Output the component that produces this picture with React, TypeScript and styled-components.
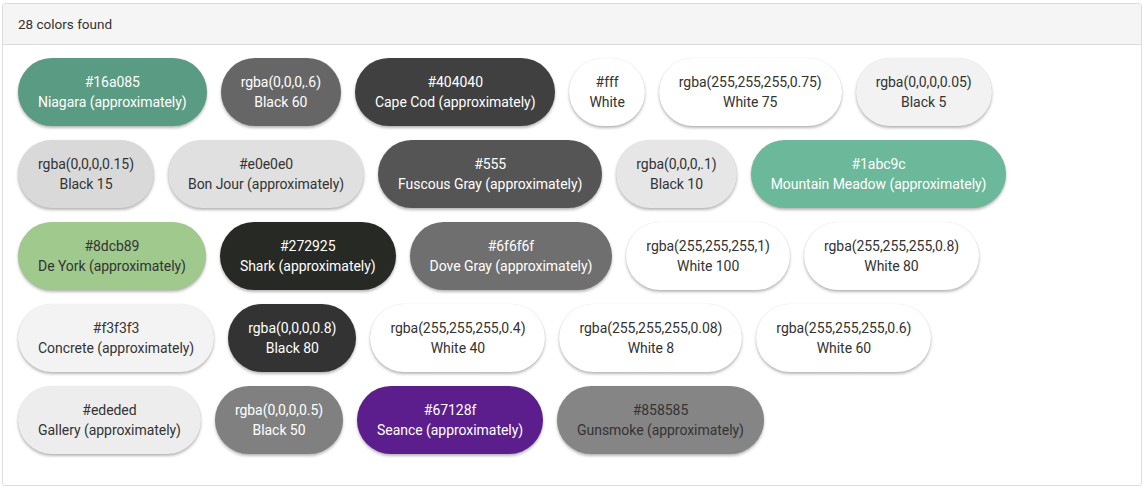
import React from "react";
import styled, { createGlobalStyle } from "styled-components";

const Global = createGlobalStyle`
  html, body { margin: 0; padding: 0; background: #fff; }
  body { font-family: Roboto, "Liberation Sans", sans-serif; }
`;

const Page = styled.div`
  padding: 3px 2px 1px 2px;
`;

const Panel = styled.section`
  border: 1px solid #dddddd;
  border-radius: 3px;
  background: #fff;
  overflow: hidden;
`;

const Header = styled.header`
  background: #f5f5f5;
  border-bottom: 1px solid #dddddd;
  padding: 10px 15px;
  font-size: 13.5px;
  line-height: 20px;
  color: #333;
`;

const Body = styled.div`
  display: flex;
  flex-wrap: wrap;
  gap: 14px;
  padding: 13px 20px 31px 15px;
`;

const Pill = styled.div<{ $bg: string; $light: boolean }>`
  background: ${(p) => p.$bg};
  color: ${(p) => (p.$light ? "#ffffff" : "#333333")};
  border-radius: 34px;
  padding: 14px 20px;
  font-size: 14px;
  letter-spacing: -0.05px;
  line-height: 20px;
  text-align: center;
  white-space: nowrap;
  box-shadow: 0 2px 3px rgba(0, 0, 0, 0.28), 0 0 1px rgba(0, 0, 0, 0.12);
`;

const Line = styled.div``;

type C = { code: string; name: string; bg: string; light: boolean };

const colors: C[] = [
  { code: "#16a085", name: "Niagara (approximately)", bg: "#5a9b83", light: true },
  { code: "rgba(0,0,0,.6)", name: "Black 60", bg: "#666666", light: true },
  { code: "#404040", name: "Cape Cod (approximately)", bg: "#404040", light: true },
  { code: "#fff", name: "White", bg: "#ffffff", light: false },
  { code: "rgba(255,255,255,0.75)", name: "White 75", bg: "#ffffff", light: false },
  { code: "rgba(0,0,0,0.05)", name: "Black 5", bg: "#f2f2f2", light: false },
  { code: "rgba(0,0,0,0.15)", name: "Black 15", bg: "#d9d9d9", light: false },
  { code: "#e0e0e0", name: "Bon Jour (approximately)", bg: "#e0e0e0", light: false },
  { code: "#555", name: "Fuscous Gray (approximately)", bg: "#555555", light: true },
  { code: "rgba(0,0,0,.1)", name: "Black 10", bg: "#e6e6e6", light: false },
  { code: "#1abc9c", name: "Mountain Meadow (approximately)", bg: "#6cb89b", light: true },
  { code: "#8dcb89", name: "De York (approximately)", bg: "#9fc98d", light: false },
  { code: "#272925", name: "Shark (approximately)", bg: "#272925", light: true },
  { code: "#6f6f6f", name: "Dove Gray (approximately)", bg: "#6f6f6f", light: true },
  { code: "rgba(255,255,255,1)", name: "White 100", bg: "#ffffff", light: false },
  { code: "rgba(255,255,255,0.8)", name: "White 80", bg: "#ffffff", light: false },
  { code: "#f3f3f3", name: "Concrete (approximately)", bg: "#f3f3f3", light: false },
  { code: "rgba(0,0,0,0.8)", name: "Black 80", bg: "#333333", light: true },
  { code: "rgba(255,255,255,0.4)", name: "White 40", bg: "#ffffff", light: false },
  { code: "rgba(255,255,255,0.08)", name: "White 8", bg: "#ffffff", light: false },
  { code: "rgba(255,255,255,0.6)", name: "White 60", bg: "#ffffff", light: false },
  { code: "#ededed", name: "Gallery (approximately)", bg: "#ededed", light: false },
  { code: "rgba(0,0,0,0.5)", name: "Black 50", bg: "#808080", light: true },
  { code: "#67128f", name: "Seance (approximately)", bg: "#5b1e8c", light: true },
  { code: "#858585", name: "Gunsmoke (approximately)", bg: "#858585", light: false },
];

export default function App() {
  return (
    <Page>
      <Global />
      <Panel>
        <Header>28 colors found</Header>
        <Body>
          {colors.map((c, i) => (
            <Pill key={i} $bg={c.bg} $light={c.light}>
              <Line>{c.code}</Line>
              <Line>{c.name}</Line>
            </Pill>
          ))}
        </Body>
      </Panel>
    </Page>
  );
}
